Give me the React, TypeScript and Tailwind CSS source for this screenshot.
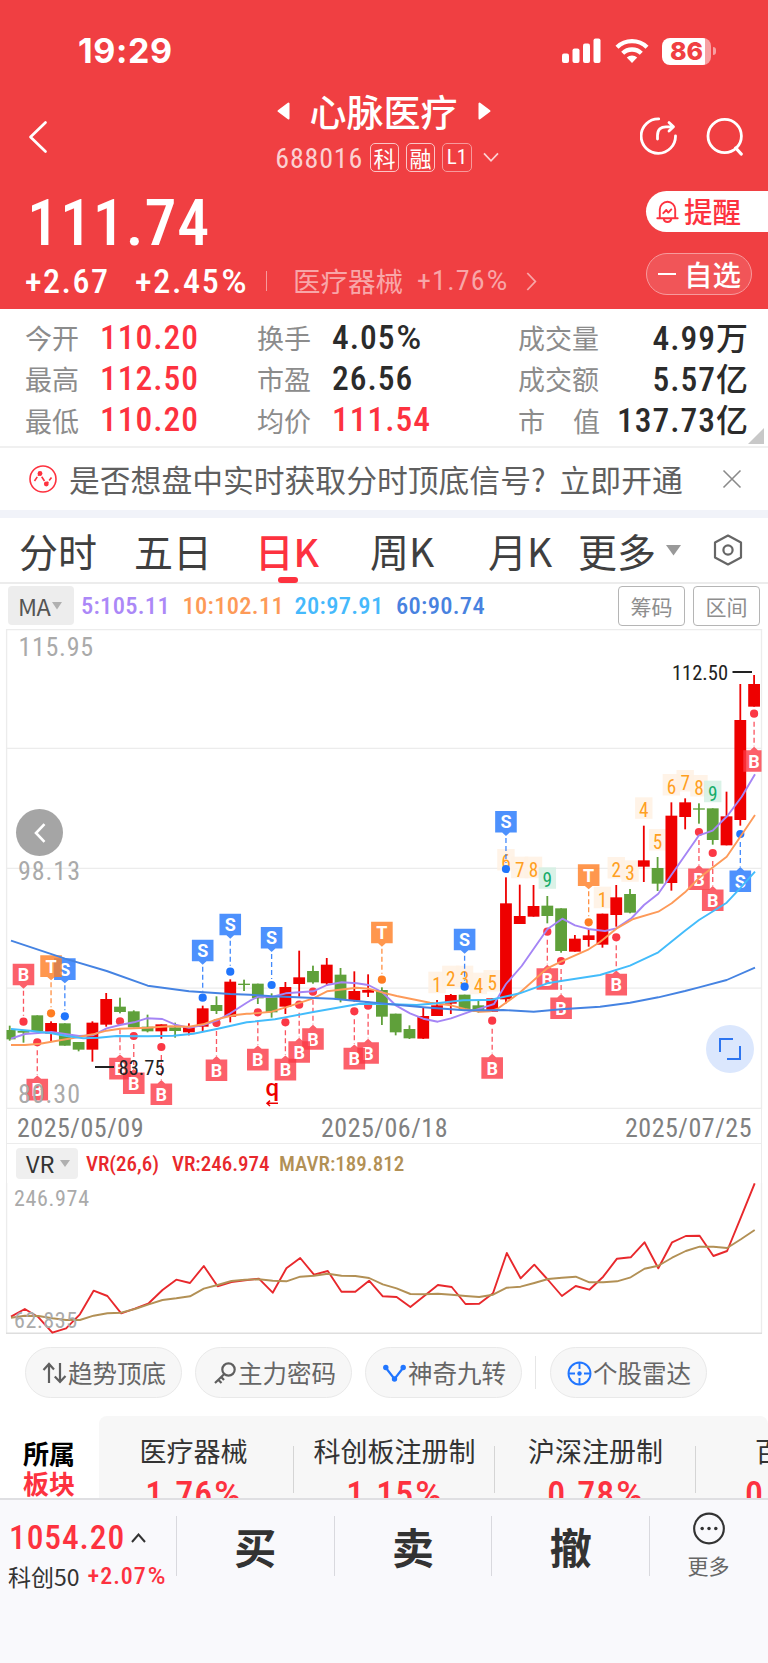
import React from "react";

type Candle = [up: boolean, high: number, top: number, bottom: number, low: number];

const X0 = 9.7;
const STEP = 13.785;
const cx = (i: number) => X0 + STEP * i;

const thirds = (base: number, rows: [number, number, number, number, number][]): Candle[] =>
  rows.map(([c, a, b, d, e]) => [c === 1, base + a / 3, base + b / 3, base + d / 3, base + e / 3]);

const candles: Candle[] = [
  ...thirds(860, [
    [0, 497, 510, 538, 542],
    [0, 510, 513, 518, 548],
    [0, 466, 466, 514, 517],
    [1, 484, 489, 521, 545],
    [0, 490, 490, 557, 557],
    [0, 546, 546, 569, 574],
    [1, 484, 488, 569, 605],
    [1, 399, 417, 494, 500],
    [0, 413, 440, 456, 460],
    [0, 451, 454, 502, 502],
    [0, 464, 500, 514, 517],
    [1, 493, 493, 514, 536],
    [0, 488, 502, 513, 533],
    [1, 490, 502, 517, 526],
    [1, 437, 445, 500, 513],
    [0, 409, 435, 453, 462],
    [1, 358, 365, 470, 487],
    [0, 359, 371, 375, 393],
    [0, 371, 371, 415, 432],
    [0, 400, 412, 457, 473],
    [1, 366, 381, 440, 462],
    [1, 272, 352, 372, 410],
    [0, 317, 333, 367, 371],
    [1, 294, 314, 370, 378],
    [0, 324, 344, 418, 427],
    [1, 334, 393, 422, 425],
    [1, 343, 390, 398, 411],
    [0, 382, 390, 470, 495],
    [0, 461, 461, 517, 526],
    [0, 496, 507, 535, 537],
    [1, 443, 468, 536, 537],
    [1, 420, 436, 468, 468],
    [1, 402, 405, 431, 462],
    [0, 404, 404, 447, 447],
    [0, 422, 436, 455, 458],
    [1, 415, 415, 455, 455],
  ]),
  ...thirds(760, [
    [1, 352, 430, 718, 730],
    [1, 374, 468, 492, 492],
    [1, 375, 438, 470, 470],
    [0, 408, 437, 468, 490],
    [0, 445, 445, 573, 578],
    [1, 525, 536, 575, 575],
    [1, 508, 526, 540, 560],
    [1, 461, 461, 554, 563],
    [1, 375, 412, 465, 500],
    [0, 387, 402, 458, 460],
    [1, 197, 301, 320, 366],
    [0, 291, 324, 371, 393],
    [1, 127, 167, 369, 392],
    [1, 115, 127, 171, 208],
    [0, 130, 145, 149, 191],
    [0, 145, 145, 240, 254],
    [1, 95, 169, 256, 256],
  ]),
  ...thirds(620, [
    [1, 192, 300, 600, 617],
    [1, 165, 192, 260, 260],
  ]),
];

type Kind = "B" | "S" | "T";
const markers: { i: number; k: Kind; dot: number; above?: boolean }[] = [
  { i: 4, k: "S", dot: 1016.3, above: true },
  { i: 3, k: "T", dot: 1013.3, above: true },
  { i: 1, k: "B", dot: 1021.7, above: true },
  { i: 14, k: "S", dot: 997.7, above: true },
  { i: 16, k: "S", dot: 971.7, above: true },
  { i: 19, k: "S", dot: 985, above: true },
  { i: 27, k: "T", dot: 979.7, above: true },
  { i: 33, k: "S", dot: 986.7, above: true },
  { i: 36, k: "S", dot: 869, above: true },
  { i: 42, k: "T", dot: 922.3, above: true },
  { i: 2, k: "B", dot: 1042.3 },
  { i: 8, k: "B", dot: 1021.3 },
  { i: 9, k: "B", dot: 1036 },
  { i: 11, k: "B", dot: 1047 },
  { i: 15, k: "B", dot: 1023 },
  { i: 18, k: "B", dot: 1012.3 },
  { i: 22, k: "B", dot: 991.7 },
  { i: 21, k: "B", dot: 1004.7 },
  { i: 20, k: "B", dot: 1022.3 },
  { i: 26, k: "B", dot: 1005.7 },
  { i: 25, k: "B", dot: 1011.3 },
  { i: 35, k: "B", dot: 1020.7 },
  { i: 39, k: "B", dot: 931.7 },
  { i: 40, k: "B", dot: 961 },
  { i: 44, k: "B", dot: 937.3 },
  { i: 50, k: "B", dot: 832 },
  { i: 51, k: "B", dot: 853 },
  { i: 53, k: "S", dot: 834 },
  { i: 54, k: "B", dot: 713.7 },
];

const fill: Record<Kind, string> = { B: "#fb3845", S: "#2075fc", T: "#ff7d22" };

const counts: [i: number, n: number, top: number][] = [
  [31, 1, 971.7], [32, 2, 965.7], [33, 3, 965.7], [34, 4, 972.7], [35, 5, 970],
  [36, 6, 849], [37, 7, 856.7], [38, 8, 856.7], [39, 9, 867.3],
  [43, 1, 886.7], [44, 2, 857], [45, 3, 860.3], [46, 4, 797.3], [47, 5, 829],
  [48, 6, 774], [49, 7, 770], [50, 8, 775], [51, 9, 780.7],
];

type Seg = [ox: number, oy: number, pts: number[]];
const trace = (segs: Seg[]) =>
  segs
    .flatMap(([ox, oy, p]) => {
      const out: string[] = [];
      for (let j = 0; j < p.length; j += 2) out.push(`${(ox + p[j] / 3).toFixed(1)},${(oy + p[j + 1] / 3).toFixed(1)}`);
      return out;
    })
    .join(" ");

const ma60 = trace([
  [0, 860, [33, 242, 195, 296, 320, 333, 443, 377, 567, 394, 691, 402]],
  [250, 860, [0, 404, 65, 409, 250, 416, 390, 430, 520, 442, 644, 451]],
  [490, 760, [0, 751, 40, 750, 131, 755, 213, 748, 330, 740, 420, 728, 505, 712, 585, 693, 627, 682, 710, 660, 795, 623]],
]);
const ma20 = trace([
  [0, 860, [33, 507, 90, 512, 154, 520, 200, 528, 250, 535, 295, 533, 350, 528, 443, 529, 520, 527, 580, 521, 650, 507, 740, 487]],
  [250, 860, [0, 486, 75, 478, 190, 456, 330, 431, 400, 432, 500, 435, 560, 430, 640, 421, 700, 420]],
  [490, 760, [0, 720, 89, 700, 172, 670, 213, 663, 330, 645, 420, 617, 505, 577, 585, 512, 627, 480, 710, 428, 750, 385, 795, 335]],
]);
const ma10 = trace([
  [0, 860, [33, 555, 75, 555, 120, 551, 180, 541, 237, 531, 278, 523, 320, 512, 360, 506, 443, 503, 510, 499, 567, 500, 609, 493, 650, 478, 700, 466, 740, 461]],
  [250, 860, [0, 461, 65, 455, 107, 442, 190, 415, 231, 394, 320, 383, 355, 386, 396, 397, 440, 408, 540, 428, 603, 436, 644, 447, 690, 455]],
  [490, 760, [0, 754, 25, 745, 89, 698, 172, 625, 213, 605, 296, 568, 330, 546, 379, 506, 430, 477, 505, 455, 545, 430, 585, 397, 627, 354, 710, 290, 750, 232, 795, 165]],
]);
const ma5 = trace([
  [0, 860, [33, 536, 75, 522, 154, 516, 237, 528, 278, 526, 320, 505, 360, 495, 402, 487, 440, 475, 487, 477, 526, 494, 567, 503, 609, 495, 650, 482, 691, 460, 740, 428]],
  [250, 860, [0, 422, 25, 410, 65, 411, 107, 400, 190, 394, 231, 375, 275, 367, 320, 370, 355, 375, 396, 396, 437, 436, 480, 460, 520, 476, 563, 485, 603, 475, 660, 455]],
  [490, 760, [0, 736, 12, 732, 48, 672, 95, 618, 172, 508, 217, 476, 255, 496, 300, 508, 345, 513, 379, 505, 425, 474, 462, 435, 505, 401, 627, 226, 668, 212, 712, 168, 755, 110, 795, 43]],
]);

const vr = [650, 627, 652, 698, 685, 643, 572, 588, 640, 626, 610, 570, 539, 549, 498, 559, 546, 541, 536, 578, 505, 474, 524, 513, 575, 575, 542, 589, 591, 621, 588, 555, 561, 612, 611, 580, 459, 535, 494, 540, 588, 558, 569, 530, 476, 472, 427, 505, 427, 408, 407, 468, 453, 352, 250];
const mavr = [653, 647, 648, 655, 660, 660, 647, 640, 638, 627, 613, 600, 595, 589, 566, 555, 543, 539, 538, 542, 544, 530, 527, 521, 527, 528, 534, 553, 565, 582, 583, 581, 584, 588, 591, 584, 563, 560, 549, 537, 533, 530, 547, 547, 544, 532, 506, 497, 473, 453, 440, 440, 444, 418, 390];
const vrLine = (v: number[]) => v.map((y, i) => `${(11 + 13.772 * i).toFixed(1)},${(1100 + y / 3).toFixed(1)}`).join(" ");

function Marker({ i, k, dot, above }: { i: number; k: Kind; dot: number; above?: boolean }) {
  const x = cx(i);
  const top = above ? dot - 58 : dot + 36.5;
  const c = fill[k];
  const shape = above
    ? `M${x - 10.8} ${top}h21.6v21.6h-7l-3.8 3.4l-3.8 -3.4h-7z`
    : `M${x - 10.8} ${top}h7l3.8 -3.4l3.8 3.4h7v21.6h-21.6z`;
  return (
    <g>
      <path d={shape} fill={c} opacity={0.8} />
      <line x1={x} x2={x} y1={above ? top + 27 : dot + 8} y2={above ? dot - 6 : top - 4} stroke={c} strokeWidth={1.3} strokeDasharray="5 3" opacity={0.85} />
      <circle cx={x} cy={dot} r={4.1} fill={c} />
      <text className="[font-stretch:100%]" x={x} y={top + 17.3} textAnchor="middle" fontSize={18} fontWeight={700} fill="#fff">{k}</text>
    </g>
  );
}

function Chart() {
  return (
    <svg className="block h-[480px] w-full overflow-hidden [font-stretch:85%]" viewBox="0 629 768 480" fontFamily="Roboto, sans-serif">
      <defs>
        <clipPath id="plot"><rect x="6.5" y="629" width="755" height="480" /></clipPath>
      </defs>
      <g stroke="#ececec" strokeWidth="1.3">
        {[629.6, 748.4, 868.3, 988.2, 1108.3].map((y) => <line key={y} x1="6" x2="762" y1={y} y2={y} />)}
        <line x1="6.6" x2="6.6" y1="629" y2="1109" />
        <line x1="761.5" x2="761.5" y1="629" y2="1109" />
      </g>
      <g clipPath="url(#plot)">
        {counts.map(([i, n, top]) => (
          <g key={i}>
            <rect x={cx(i) - 8.7} y={top} width={17.4} height={21.5} fill={n === 9 ? "#d3f0e3" : "#fff1e3"} opacity={0.85} />
            <text x={cx(i)} y={top + 20} textAnchor="middle" fontSize={20} fill={n === 9 ? "#16ac69" : "#ff9f21"} textLength={9.5} lengthAdjust="spacingAndGlyphs">{n}</text>
          </g>
        ))}
        {candles.map(([up, h, t, b, l], i) => (
          <g key={i} fill={up ? "#ee0000" : "#5fa03a"}>
            <rect x={cx(i) - 0.9} y={h} width={1.8} height={l - h} />
            <rect x={cx(i) - 5.9} y={t} width={11.8} height={b - t} />
          </g>
        ))}
        {markers.map((m) => <Marker key={m.i} {...m} />)}
      </g>
      <g fill="none" strokeWidth="1.9" strokeLinejoin="round">
        <polyline points={ma5} stroke="#a585f5" />
        <polyline points={ma10} stroke="#fd9a59" />
        <polyline points={ma20} stroke="#43bcfb" />
        <polyline points={ma60} stroke="#4583e2" />
      </g>
      <g fontSize="26" fill="#aaaaaa">
        <text x="18.5" y="656" textLength="74.5">115.95</text>
        <text x="18" y="880" textLength="62">98.13</text>
        <text x="18" y="1103" textLength="62">80.30</text>
      </g>
      <g fontSize="20.5" fill="#222">
        <text x="672" y="679.5" textLength="56">112.50</text>
        <rect x="732.5" y="671" width="19.5" height="2" />
        <text x="118.5" y="1074.5" textLength="46">83.75</text>
        <rect x="95" y="1066" width="19" height="2" />
      </g>
      <text x="265.5" y="1096" fontSize="24" fontWeight="500" fill="#ee0000" className="[font-stretch:100%]">q</text>
      <path d="M278 1103.3H267.5M270 1100.6L267 1103.3L270 1106" stroke="#ee0000" strokeWidth="1.5" fill="none" />
    </svg>
  );
}

function VrChart() {
  return (
    <svg className="block h-[151px] w-full shrink-0 [font-stretch:85%]" viewBox="0 1183 768 151" fontFamily="Roboto, sans-serif">
      <path d="M6.6 1183V1333.5M761.5 1183V1333.5" stroke="#ececec" strokeWidth="1.3" />
      <path d="M6 1333.2H762" stroke="#dedede" strokeWidth="1.6" />
      <g fill="none" strokeWidth="1.9" strokeLinejoin="round">
        <polyline points={vrLine(vr)} stroke="#e8282c" />
        <polyline points={vrLine(mavr)} stroke="#b29055" />
      </g>
      <g fontSize="22" fill="#aaaaaa">
        <text x="14" y="1206" textLength="75">246.974</text>
        <text x="14" y="1327.5" textLength="63">62.835</text>
      </g>
    </svg>
  );
}

const num = "font-[Roboto,sans-serif] [font-stretch:85%]";

const Pct = () => <span className="ml-[1px] [font-stretch:100%]">%</span>;

function Stat({ label, value, red, right }: { label: React.ReactNode; value: React.ReactNode; red?: boolean; right?: boolean }) {
  return (
    <div className={`flex h-[41.3px] items-center ${right ? "justify-between" : "gap-[21px]"}`}>
      <span className="text-[27px] leading-none text-[#8c8c8c]">{label}</span>
      <span className={`${num} text-[33.5px] leading-none font-medium tracking-[1px] ${red ? "text-[#fd323f]" : "text-[#2b2b2b]"}`}>{value}</span>
    </div>
  );
}

const Cjk = ({ children }: { children: React.ReactNode }) => (
  <span className="font-['Noto_Sans_CJK_SC',sans-serif] text-[32px] leading-none font-medium tracking-[-1px]">{children}</span>
);

const Spread = () => (
  <span className="flex w-[82px] justify-between"><span>市</span><span>值</span></span>
);

function Chip({ icon, label }: { icon: React.ReactNode; label: string }) {
  return (
    <button className="flex h-[51px] w-[157px] items-center gap-[1px] rounded-full border border-[#e9e9e9] bg-[#f7f7f7] pt-[1px] pl-[16px] text-[24.5px] leading-none whitespace-nowrap text-[#666]">
      {icon}
      <span>{label}</span>
    </button>
  );
}

function Board({ name, pct }: { name: string; pct: string }) {
  return (
    <div className="relative flex w-[201px] shrink-0 flex-col items-center pt-[21px]">
      <span className="text-[27px] leading-[28px] whitespace-nowrap text-[#333]">{name}</span>
      <span className={`${num} mt-[10px] text-[36px] leading-[40px] font-medium tracking-[1px] text-[#fd323f]`}>{pct}<Pct /></span>
      <span className="absolute top-[30px] right-0 h-[47px] w-px bg-[#d5d5d5]" />
    </div>
  );
}

export default function App() {
  return (
    <div className="flex h-[1663px] w-[768px] flex-col overflow-hidden bg-white font-['Noto_Sans_CJK_SC',sans-serif]">
      <header className="flex h-[309px] shrink-0 flex-col bg-[#f03f42] text-white">
        <div className="flex h-[80px] items-end justify-between pr-[52px] pb-[15px] pl-[78px]">
          <span className="font-[Inter,sans-serif] text-[34px] leading-[28px] font-bold tracking-[0.6px]">19:29</span>
          <div className="flex h-[28px] items-center">
            <svg width="39" height="26" viewBox="0 0 39 26" fill="#fff">
              <rect x="0" y="15.5" width="7" height="9.5" rx="2" />
              <rect x="10.5" y="10.5" width="7" height="14.5" rx="2" />
              <rect x="21" y="5.5" width="7" height="19.5" rx="2" />
              <rect x="31.5" y="0.5" width="7" height="24.5" rx="2" />
            </svg>
            <svg className="ml-[14px]" width="34" height="26" viewBox="0 0 34 26" fill="none" stroke="#fff" strokeWidth="4.3">
              <path d="M2 9.3A21.5 21.5 0 0 1 32 9.3" />
              <path d="M7.7 15.3A13.3 13.3 0 0 1 26.3 15.3" />
              <path d="M17 25L11.8 19.6A7.6 7.6 0 0 1 22.2 19.6Z" fill="#fff" stroke="none" />
            </svg>
            <div className="ml-[13px] flex h-[27px] w-[49px] items-center justify-center rounded-[8px] bg-[linear-gradient(to_right,#fff_43px,#f7a0a2_43px)]">
              <span className="font-[Inter,sans-serif] text-[25px] leading-[27px] font-extrabold text-[#f03f42]">86</span>
            </div>
            <span className="ml-[2px] h-[8px] w-[3px] rounded-r-full bg-[#f7a0a2]" />
          </div>
        </div>

        <div className="flex h-[100px] justify-between pr-[24px] pl-[28px]">
          <div className="w-[80px] pt-[40px]">
            <svg width="20" height="34" viewBox="0 0 20 34" fill="none" stroke="#fff" strokeWidth="2.7" strokeLinecap="round" strokeLinejoin="round">
              <path d="M17.5 2.5L2.5 17L17.5 31.5" />
            </svg>
          </div>
          <div className="ml-[24px] flex flex-col items-center">
            <div className="mt-[11px] mr-[5px] flex h-[40px] items-center gap-[20px]">
              <svg width="13" height="18" viewBox="0 0 13 18"><path d="M11.5 1.5V16.5L1.5 9Z" fill="#fff" stroke="#fff" strokeWidth="2" strokeLinejoin="round" /></svg>
              <span className="text-[37px] leading-none font-medium">心脉医疗</span>
              <svg width="13" height="18" viewBox="0 0 13 18"><path d="M1.5 1.5V16.5L11.5 9Z" fill="#fff" stroke="#fff" strokeWidth="2" strokeLinejoin="round" /></svg>
            </div>
            <div className="mt-[11px] flex h-[31px] items-center gap-[7px]">
              <span className={`${num} w-[90px] pt-[3px] text-right text-[28px] leading-none tracking-[0.8px] text-[#fbd0d1]`}>688016</span>
              <span className="flex h-[29px] w-[29px] items-center justify-center rounded-[5px] border border-[#fbc5c6] pb-[1px] text-[22px] leading-none">科</span>
              <span className="flex h-[29px] w-[29px] items-center justify-center rounded-[5px] border border-[#fbc5c6] pb-[1px] text-[22px] leading-none">融</span>
              <span className={`${num} flex h-[29px] w-[30px] items-center justify-center rounded-[5px] border border-[#f79a9c] text-[21px] leading-none`}>L1</span>
              <svg className="ml-[4px]" width="16" height="11" viewBox="0 0 16 11" fill="none" stroke="#fbd0d1" strokeWidth="1.7"><path d="M1 1.3L8 8.8L15 1.3" /></svg>
            </div>
          </div>
          <div className="flex h-[38px] gap-[28px] pt-[37px]">
            <svg width="38" height="39" viewBox="0 0 38 39" fill="none" stroke="#fff" strokeWidth="2.8" strokeLinecap="round" strokeLinejoin="round">
              <path d="M18.7 1.9A17.2 17.2 0 1 0 35.5 18.8" />
              <path d="M17.5 22V18.5C17.5 12 21 9.8 26 9.8H33M29 5.6L33.5 9.8L29 14" />
            </svg>
            <svg width="38" height="39" viewBox="0 0 38 39" fill="none" stroke="#fff" strokeWidth="2.8" strokeLinecap="round">
              <circle cx="18.7" cy="19" r="16.7" /><path d="M29.8 31L35.2 37" strokeWidth="3.3" />
            </svg>
          </div>
        </div>

        <div className="flex flex-1 justify-between">
          <div className="pl-[25px]">
            <div className={`${num} pt-[12px] pl-[2px] text-[64px] leading-[64px] font-medium tracking-[0.9px]`}>111.74</div>
            <div className="mt-[8px] flex h-[34px] items-center">
              <span className={`${num} w-[110px] text-[34px] leading-none font-medium tracking-[1.5px]`}>+2.67</span>
              <span className={`${num} w-[131px] text-[34px] leading-none font-medium tracking-[1.7px]`}>+2.45<Pct /></span>
              <span className="h-[20px] w-px bg-[#f79a9c]" />
              <span className="ml-[26px] text-[27.5px] leading-none text-[#f8a6a8]">医疗器械</span>
              <span className={`${num} ml-[14px] w-[92px] text-[28px] leading-none tracking-[1.2px] text-[#f8a6a8]`}>+1.76<Pct /></span>
              <svg className="ml-[17px]" width="11" height="19" viewBox="0 0 11 19" fill="none" stroke="#f8a6a8" strokeWidth="1.8"><path d="M1.3 1L9.3 9.5L1.3 18" /></svg>
            </div>
          </div>
          <div className="flex w-[122px] flex-col pt-[11px]">
            <button className="flex h-[41px] items-center rounded-l-full bg-white pl-[10px] text-[28.5px] leading-none font-medium text-[#fd323f]">
              <svg width="23" height="25" viewBox="0 0 23 25" fill="none" stroke="#fd323f" strokeWidth="1.9" strokeLinecap="round" strokeLinejoin="round">
                <path d="M3.8 18.5V10.5A7.7 7.7 0 0 1 19.2 10.5V18.5M1.3 19.3H21.7M7.8 20C8.5 24 14.5 24 15.2 20M7.3 14.2L10.3 11L12.3 13.6L15.3 10.4" />
              </svg>
              <span className="ml-[5px]">提醒</span>
            </button>
            <button className="mt-[21px] flex h-[42px] w-[106px] items-center rounded-full border border-[#f79a9c] bg-[#f15558] pl-[11px] text-[28.5px] leading-none font-medium">
              <span className="mr-[8px] h-[2.5px] w-[18px] bg-white" />
              自选
            </button>
          </div>
        </div>
      </header>

      <section className="relative flex h-[139px] shrink-0 border-b-2 border-[#f0f0f0] pt-[8px] pl-[25px]">
        <div className="w-[232px]">
          <Stat label="今开" value="110.20" red />
          <Stat label="最高" value="112.50" red />
          <Stat label="最低" value="110.20" red />
        </div>
        <div className="w-[261px]">
          <Stat label="换手" value={<>4.05<Pct /></>} />
          <Stat label="市盈" value="26.56" />
          <Stat label="均价" value="111.54" red />
        </div>
        <div className="w-[229px]">
          <Stat right label="成交量" value={<>4.99<Cjk>万</Cjk></>} />
          <Stat right label="成交额" value={<>5.57<Cjk>亿</Cjk></>} />
          <Stat right label={<Spread />} value={<>137.73<Cjk>亿</Cjk></>} />
        </div>
        <svg className="absolute right-[4px] bottom-[2px]" width="16" height="16" viewBox="0 0 16 16"><path d="M16 0V16H0Z" fill="#c8c8c8" /></svg>
      </section>

      <section className="flex h-[62px] shrink-0 items-center pr-[26px] pl-[29px]">
        <svg width="28" height="28" viewBox="0 0 28 28" fill="none" stroke="#fd323f" strokeWidth="1.6">
          <circle cx="14" cy="14" r="13" />
          <path d="M5.5 16L10.5 8.5L17.5 19L22.5 12.5" strokeDasharray="5 1.5" />
          <circle cx="11" cy="8.5" r="2.4" fill="#fd323f" stroke="none" />
          <circle cx="17.3" cy="19" r="2.4" fill="#fd323f" stroke="none" />
        </svg>
        <span className="ml-[12px] pt-[1px] text-[30.8px] leading-none whitespace-nowrap text-[#5f5f5f]">是否想盘中实时获取分时顶底信号?</span>
        <span className="ml-[14px] pt-[1px] text-[30.8px] leading-none whitespace-nowrap text-[#5f5f5f]">立即开通</span>
        <svg className="ml-auto" width="20" height="20" viewBox="0 0 20 20" stroke="#8a8a8a" strokeWidth="1.6"><path d="M1.5 1.5L18.5 18.5M18.5 1.5L1.5 18.5" /></svg>
      </section>
      <div className="h-[8px] shrink-0 bg-[#f1f3f9]" />

      <nav className="flex h-[66px] shrink-0 items-center border-b-2 border-[#ececec] pl-[19px] text-[39px] leading-none text-[#3f3f3f]">
        <span className="w-[115px]">分时</span>
        <span className="w-[121px]">五日</span>
        <span className="relative flex h-full w-[115px] items-center text-[38.5px] font-medium text-[#fd323f]">
          日K
          <span className="absolute bottom-[-1px] left-[23px] h-[6px] w-[20px] rounded-full bg-[#fd323f]" />
        </span>
        <span className="w-[118px]">周K</span>
        <span className="w-[90px]">月K</span>
        <span className="w-[88px]">更多</span>
        <svg width="15" height="11" viewBox="0 0 15 11"><path d="M0 0H15L7.5 10.5Z" fill="#999" /></svg>
        <svg className="ml-[32px]" width="30" height="32" viewBox="0 0 30 32" fill="none" stroke="#666" strokeWidth="2.2" strokeLinejoin="round">
          <path d="M15 1.5L28 8.5V23.5L15 30.5L2 23.5V8.5Z" /><circle cx="15" cy="16" r="4.6" />
        </svg>
      </nav>

      <div className={`${num} flex h-[45px] shrink-0 items-start pt-[2px] pl-[8px] text-[24.5px] leading-[40px] font-medium tracking-[0.3px]`}>
        <span className="flex h-[39px] w-[66px] items-center rounded-[4px] bg-[#ededed] pl-[10px] font-['Noto_Sans_CJK_SC',sans-serif] text-[23.5px] font-normal tracking-[-0.5px] text-[#555]">
          MA
          <svg className="ml-[2px]" width="10" height="8" viewBox="0 0 10 8"><path d="M0 0H10L5 7.5Z" fill="#b0b0b0" /></svg>
        </span>
        <span className="ml-[7px] w-[101.5px] text-[#ab88f7]">5:105.11</span>
        <span className="w-[112px] text-[#fd9a57]">10:102.11</span>
        <span className="w-[101.5px] text-[#45b9fc]">20:97.91</span>
        <span className="w-[222px] text-[#4882df]">60:90.74</span>
        <button className="flex h-[40px] w-[67px] items-center justify-center rounded-[4px] border-[1.5px] border-[#b5b5b5] font-['Noto_Sans_CJK_SC',sans-serif] text-[21px] font-normal tracking-normal text-[#8e8e8e]">筹码</button>
        <button className="ml-[8px] flex h-[40px] w-[67px] items-center justify-center rounded-[4px] border-[1.5px] border-[#b5b5b5] font-['Noto_Sans_CJK_SC',sans-serif] text-[21px] font-normal tracking-normal text-[#8e8e8e]">区间</button>
      </div>

      <div className="relative shrink-0">
        <Chart />
        <button className="absolute top-[180px] left-[16px] flex size-[47px] items-center justify-center rounded-full bg-[#a5a5a5]">
          <svg width="12" height="20" viewBox="0 0 12 20" fill="none" stroke="#fff" strokeWidth="2.6"><path d="M10.5 1.2L2 10L10.5 18.8" /></svg>
        </button>
        <button className="absolute top-[396px] left-[706px] flex size-[48px] items-center justify-center rounded-full bg-[#dbe7fd]">
          <svg width="22" height="22" viewBox="0 0 22 22" fill="none" stroke="#2d75f0" strokeWidth="2"><path d="M1 14V1H14M21 8V21H8" /></svg>
        </button>
      </div>

      <div className={`${num} mx-[6px] flex h-[35px] shrink-0 items-center justify-between border-x border-b border-[#ececec] pt-[3px] pr-[9px] pl-[10px] text-[26px] leading-none tracking-[0.5px] text-[#808080]`}>
        <span>2025/05/09</span><span>2025/06/18</span><span>2025/07/25</span>
      </div>

      <div className={`${num} mx-[6px] flex h-[39px] shrink-0 items-center border-x border-[#ececec] pt-[2px] pl-[9px] text-[21px] leading-none font-medium`}>
        <span className="-mt-[2px] flex h-[31px] w-[62px] items-center rounded-[4px] bg-[#efefef] pl-[10px] font-['Noto_Sans_CJK_SC',sans-serif] text-[23.5px] font-normal tracking-normal text-[#333]">
          VR
          <svg className="ml-[6px]" width="10" height="7" viewBox="0 0 10 7"><path d="M0 0H10L5 7Z" fill="#b0b0b0" /></svg>
        </span>
        <span className="ml-[8px] w-[86px] text-[#e8282c]">VR(26,6)</span>
        <span className="w-[107px] text-[#e8282c]">VR:246.974</span>
        <span className="text-[#b29055]">MAVR:189.812</span>
      </div>
      <VrChart />

      <div className="flex h-[78px] shrink-0 items-start gap-[13px] pt-[13px] pl-[25px]">
        <Chip label="趋势顶底" icon={
          <svg width="25" height="22" viewBox="0 0 25 22" fill="none" stroke="#5f5f5f" strokeWidth="2.2"><path d="M7 21V2M1.5 8L7 2L12 7.5M18 1V20M12.8 14.5L18 20L23.5 14" /></svg>} />
        <Chip label="主力密码" icon={
          <svg width="25" height="24" viewBox="0 0 25 24" fill="none" stroke="#5f5f5f" strokeWidth="2.2"><circle cx="16.5" cy="8.5" r="6.2" /><path d="M12.3 13L3 22M6 18.5L9.5 22M9 15.7L12 19" /></svg>} />
        <Chip label="神奇九转" icon={
          <svg width="25" height="20" viewBox="0 0 25 20" fill="none" stroke="#2176ff" strokeWidth="2.2"><path d="M4 5L12.5 16L21 5" /><g fill="#2176ff" stroke="none"><circle cx="3.8" cy="4.5" r="2.7" /><circle cx="12.5" cy="16" r="2.7" /><circle cx="21.2" cy="4.5" r="2.7" /></g></svg>} />
        <span className="mt-[9px] mr-[1px] h-[33px] w-px bg-[#e6e6e6]" />
        <Chip label="个股雷达" icon={
          <svg width="25" height="25" viewBox="0 0 25 25" fill="none" stroke="#2176ff" strokeWidth="1.9"><circle cx="12.5" cy="12.5" r="11" /><path d="M12.5 1.5V8M12.5 17V23.5M1.5 12.5H8M17 12.5H23.5" /><circle cx="12.5" cy="12.5" r="2.2" fill="#2176ff" stroke="none" /></svg>} />
      </div>

      <div className="flex h-[86px] shrink-0 overflow-hidden pt-[4px]">
        <div className="flex w-[99px] shrink-0 flex-col pt-[22px] pl-[23px] text-[26px] leading-[30px] font-bold text-black">
          <span>所属</span><span className="text-[#fd323f]">板块</span>
        </div>
        <div className="flex h-[90px] flex-1 overflow-hidden rounded-t-[8px] bg-[#f7f7f7]">
          <div className="-ml-[6px] flex">
            <Board name="医疗器械" pct="1.76" />
            <Board name="科创板注册制" pct="1.15" />
            <Board name="沪深注册制" pct="0.78" />
          </div>
          <div className="flex shrink-0 flex-col pt-[21px] pl-[49px]">
            <span className="pl-[10px] text-[27px] leading-[28px] text-[#333]">百</span>
            <span className={`${num} mt-[10px] text-[36px] leading-[40px] font-medium tracking-[1px] text-[#fd323f]`}>0.</span>
          </div>
        </div>
      </div>

      <footer className="flex h-[165px] shrink-0 border-t-2 border-[#dfdfe2] bg-[#f9f9fc]">
        <div className="flex w-[176px] flex-col pt-[21px] pl-[9px]">
          <div className="flex h-[34px] items-center">
            <span className={`${num} w-[115px] text-[33.5px] leading-none font-medium tracking-[0.9px] text-[#fd323f]`}>1054.20</span>
            <svg className="ml-[7px]" width="15" height="10" viewBox="0 0 15 10" fill="none" stroke="#333" strokeWidth="2"><path d="M1 9L7.5 1.5L14 9" /></svg>
          </div>
          <div className="mt-[8px] flex h-[26px] items-center whitespace-nowrap">
            <span className="-ml-[1px] text-[23px] leading-none text-[#333]">科创50</span>
            <span className={`${num} ml-[8px] text-[24px] leading-none font-medium tracking-[1px] text-[#fd323f]`}>+2.07<Pct /></span>
          </div>
        </div>
        {["买", "卖", "撤"].map((t) => (
          <div key={t} className="mt-[16px] flex h-[60px] w-[157.7px] items-center justify-center border-l border-[#d9d9de] text-[42px] leading-none font-bold text-[#333]">{t}</div>
        ))}
        <div className="mt-[16px] flex h-[60px] flex-1 flex-col items-center border-l border-[#d9d9de] pr-[1px]">
          <svg className="-mt-[4px]" width="34" height="34" viewBox="0 0 34 34" fill="none" stroke="#333" strokeWidth="2.2"><circle cx="17" cy="17" r="15.3" /><g fill="#333" stroke="none"><circle cx="10" cy="17" r="1.8" /><circle cx="17" cy="17" r="1.8" /><circle cx="24" cy="17" r="1.8" /></g></svg>
          <span className="mt-[9px] text-[21px] leading-[22px] text-[#666]">更多</span>
        </div>
      </footer>
    </div>
  );
}
